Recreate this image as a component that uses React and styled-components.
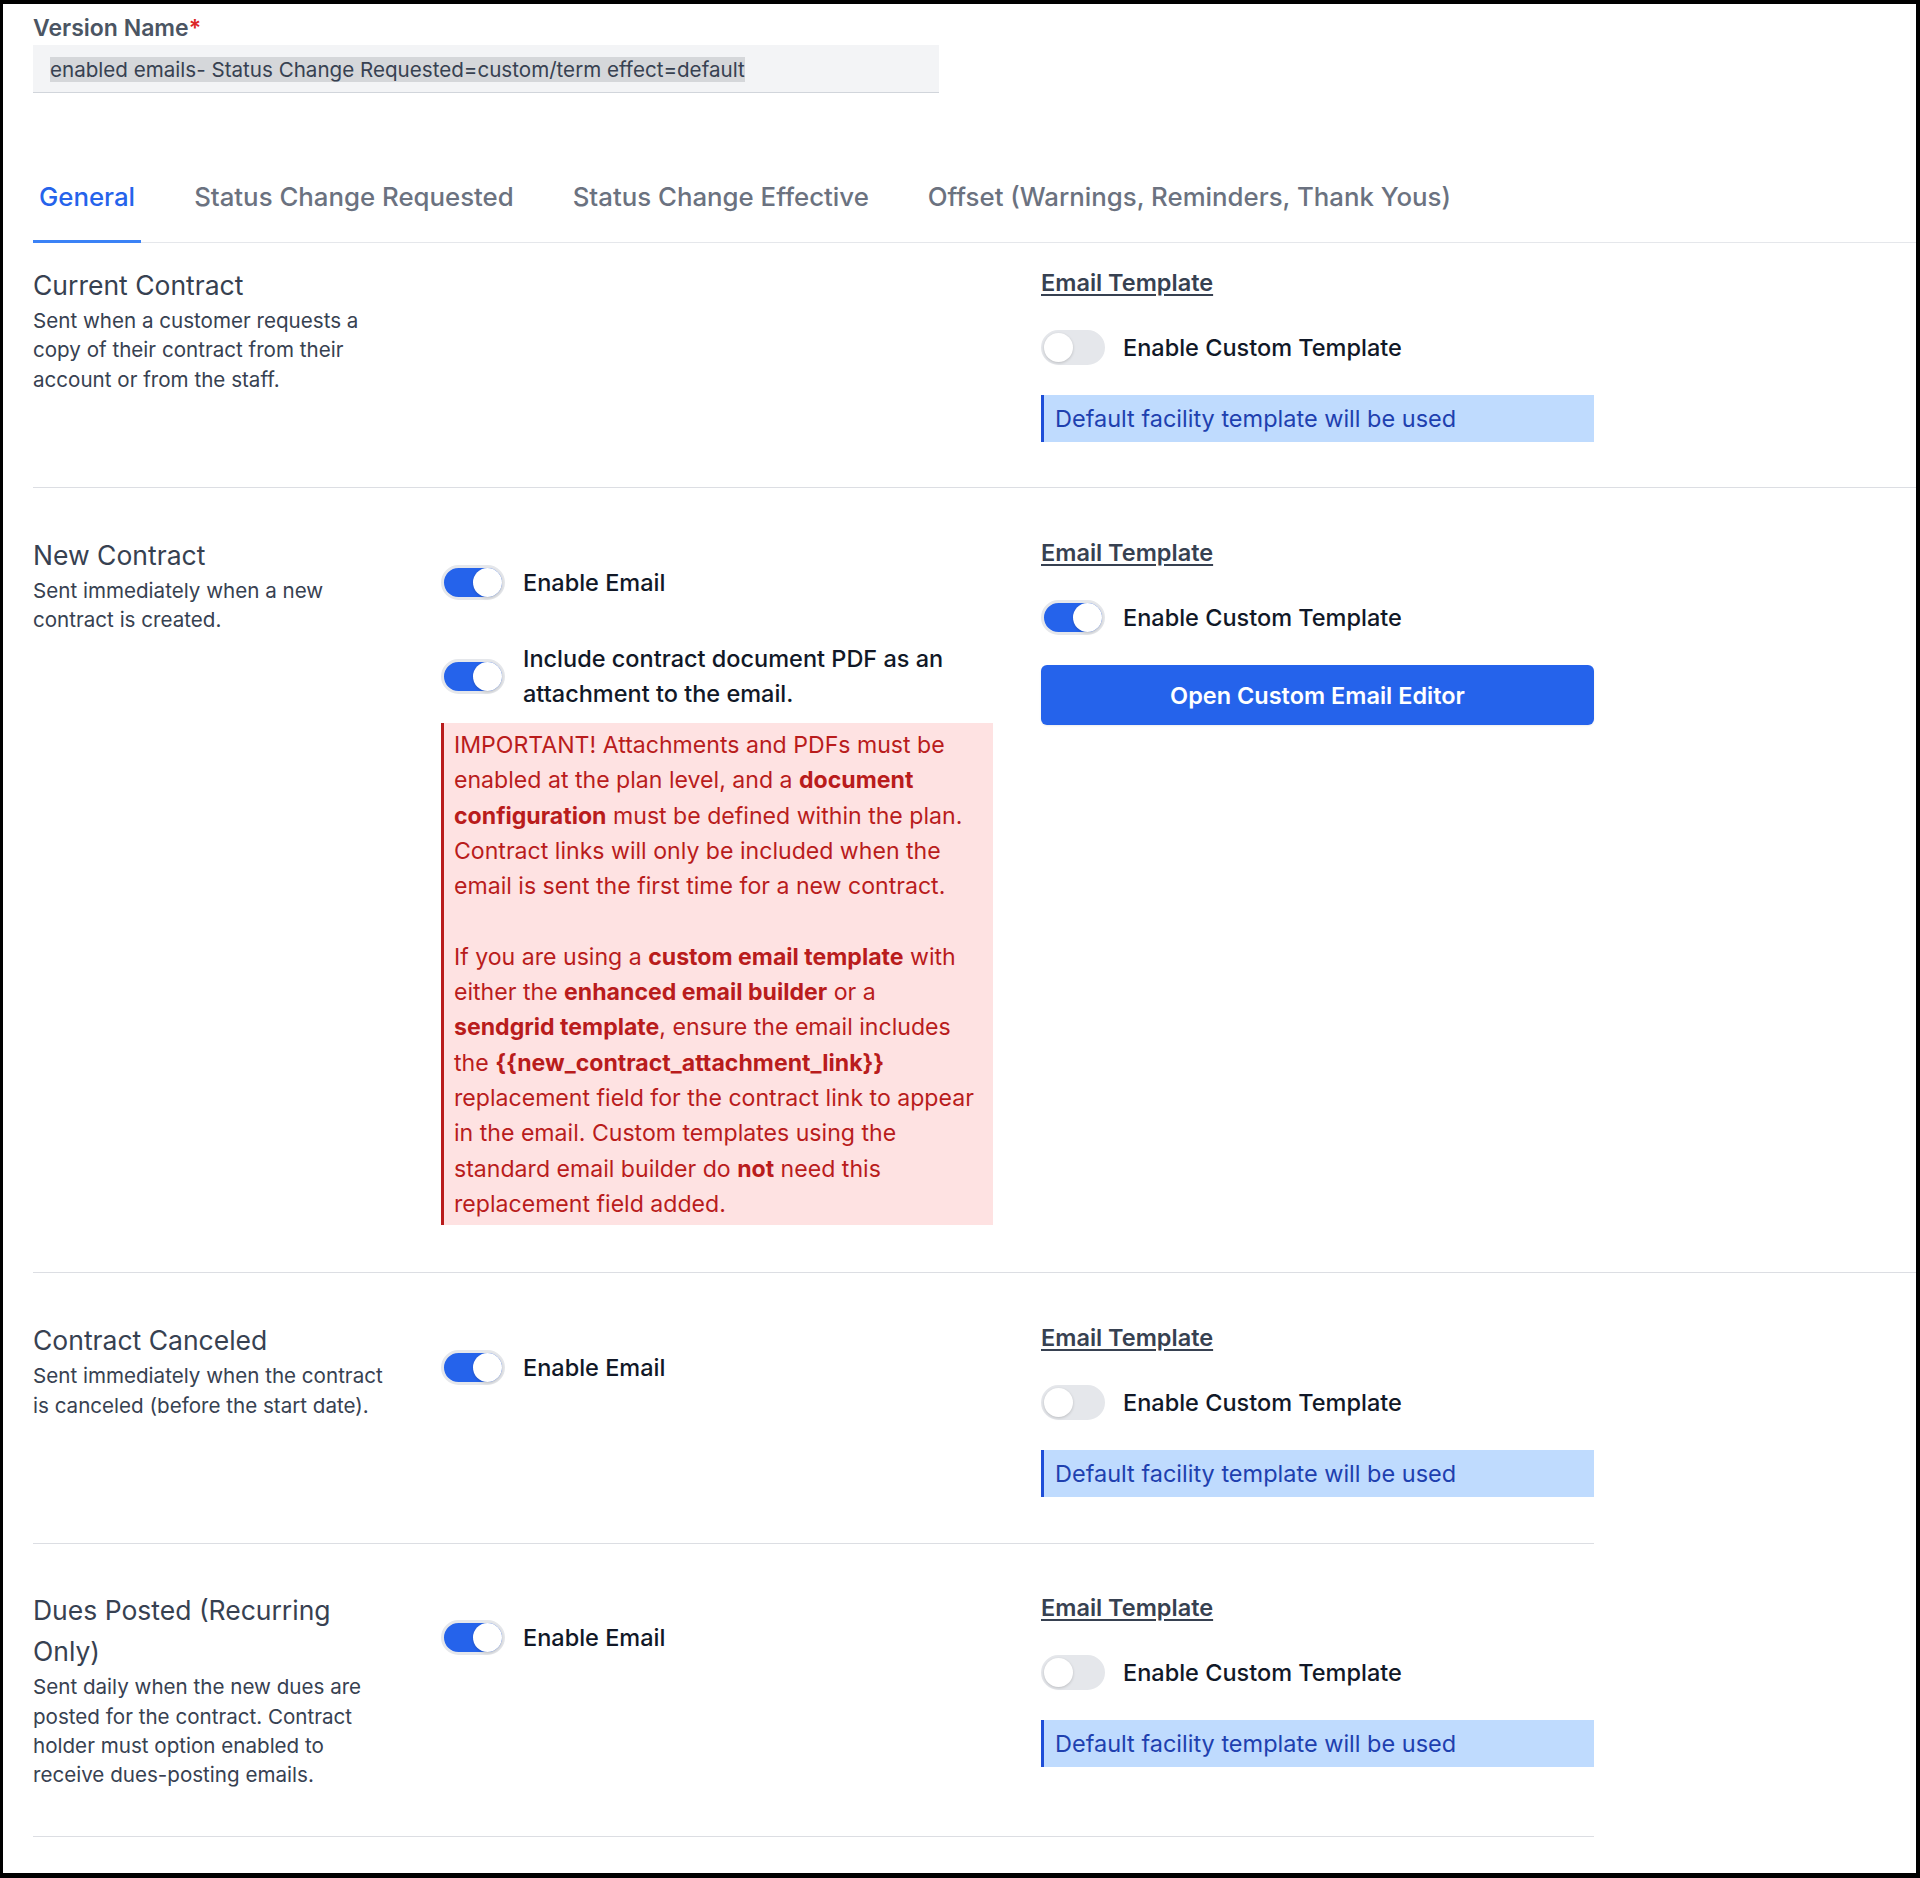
import React from "react";
import styled, { createGlobalStyle } from "styled-components";

const GlobalStyle = createGlobalStyle`
  body {
    margin: 0;
    background: #ffffff;
    font-family: Inter, "Noto Sans", "Liberation Sans", sans-serif;
  }
`;

const Frame = styled.div`
  box-sizing: border-box;
  width: 1920px;
  height: 1878px;
  overflow: hidden;
  border-style: solid;
  border-color: #000;
  border-width: 4px 4px 5px 3px;
  padding: 9px 0 0 30px;
  background: #fff;
`;

const Field = styled.div`
  display: flex;
  flex-direction: column;
  width: 906px;
`;

const Label = styled.label`
  font-size: 23px;
  line-height: 30px;
  font-weight: 600;
  color: #4b5563;
  margin-bottom: 2px;
`;

const Required = styled.span`
  color: #dc2626;
`;

const TextInput = styled.div`
  box-sizing: border-box;
  height: 48px;
  display: flex;
  align-items: center;
  padding: 1px 17px 0;
  background: #f3f4f6;
  border-bottom: 1px solid #d1d5db;
  font-size: 20.6px;
  color: #374151;
`;

const Selected = styled.span`
  background: #d5d7da;
`;

const TabList = styled.nav`
  display: flex;
  gap: 47px;
  margin-top: 63px;
  border-bottom: 1px solid #e5e7eb;
`;

const Tab = styled.div`
  padding: 23px 6px 26px;
  margin-bottom: -1px;
  border-bottom: 3px solid ${(p) => (p.$active ? "#3b82f6" : "transparent")};
  font-size: 25.8px;
  line-height: 35px;
  font-weight: 500;
  color: ${(p) => (p.$active ? "#2563eb" : "#6b7280")};
  white-space: nowrap;
`;

const Section = styled.section`
  display: grid;
  grid-template-columns: 360px 552px 553px;
  column-gap: 48px;
  align-items: start;
  padding: ${(p) => p.$top}px 0 ${(p) => p.$bottom}px;
  width: ${(p) => (p.$narrow ? "1561px" : "auto")};
  border-bottom: 1px solid #dcdee3;
`;

const Info = styled.div`
  padding-right: 6px;
`;

const Heading = styled.h3`
  margin: 0;
  font-size: 26.5px;
  line-height: 41px;
  font-weight: 400;
  color: #374151;
`;

const Description = styled.p`
  margin: 0;
  font-size: 20.6px;
  line-height: 29.4px;
  color: #374151;
`;

const Options = styled.div`
  display: flex;
  flex-direction: column;
  gap: 41px;
  padding-top: 30px;
`;

const OptionGroup = styled.div`
  display: flex;
  flex-direction: column;
  gap: 12px;
`;

const TemplateColumn = styled.div`
  display: flex;
  flex-direction: column;
  gap: 30px;
`;

const TemplateTitle = styled.div`
  font-size: 23.5px;
  line-height: 35px;
  font-weight: 600;
  color: #374151;
  text-decoration: underline;
  text-underline-offset: 3px;
`;

const ToggleRow = styled.div`
  display: flex;
  align-items: center;
  gap: 18px;
`;

const Track = styled.span`
  box-sizing: border-box;
  flex-shrink: 0;
  display: inline-flex;
  align-items: center;
  justify-content: ${(p) => (p.$on ? "flex-end" : "flex-start")};
  width: 64px;
  height: 35px;
  border-radius: 18px;
  border: 3px solid #e5e7eb;
  background: ${(p) => (p.$on ? "#2563eb" : "#e5e7eb")};
`;

const Knob = styled.span`
  width: 29px;
  height: 29px;
  border-radius: 50%;
  background: #fff;
  box-shadow: 0 1px 3px rgba(0, 0, 0, 0.18);
`;

const ToggleLabel = styled.span`
  font-size: 23.5px;
  line-height: 35px;
  font-weight: 500;
  color: #111827;
`;

const Notice = styled.div`
  box-sizing: border-box;
  padding: 6px 12px 6px 11px;
  background: #bfdbfe;
  border-left: 3px solid #1d4ed8;
  font-size: 23.5px;
  line-height: 35px;
  color: #1e40af;
`;

const Warning = styled.div`
  box-sizing: border-box;
  padding: 5px 0 3px 10px;
  background: #fee2e2;
  border-left: 3px solid #b91c1c;
  font-size: 23.1px;
  line-height: 35.3px;
  color: #b91c1c;

  p {
    margin: 0;
  }
  p + p {
    margin-top: 35.3px;
  }
  strong {
    font-weight: 700;
  }
`;

const Line = styled.span`
  display: block;
  white-space: nowrap;
`;

const PrimaryButton = styled.button`
  height: 60px;
  border: none;
  border-radius: 6px;
  background: #2563eb;
  color: #fff;
  font-family: inherit;
  font-size: 23.5px;
  font-weight: 600;
  box-shadow: 0 1px 2px rgba(0, 0, 0, 0.08);
`;

const Toggle = ({ on, children }) => (
  <ToggleRow>
    <Track $on={on}>
      <Knob />
    </Track>
    <ToggleLabel>{children}</ToggleLabel>
  </ToggleRow>
);

const TemplatePanel = ({ custom }) => (
  <TemplateColumn>
    <TemplateTitle>Email Template</TemplateTitle>
    <Toggle on={custom}>Enable Custom Template</Toggle>
    {custom ? (
      <PrimaryButton>Open Custom Email Editor</PrimaryButton>
    ) : (
      <Notice>Default facility template will be used</Notice>
    )}
  </TemplateColumn>
);

const tabs = [
  "General",
  "Status Change Requested",
  "Status Change Effective",
  "Offset (Warnings, Reminders, Thank Yous)",
];

export default function App() {
  return (
    <>
      <GlobalStyle />
      <Frame>
        <Field>
          <Label>
            Version Name<Required>*</Required>
          </Label>
          <TextInput>
            <Selected>
              enabled emails- Status Change Requested=custom/term effect=default
            </Selected>
          </TextInput>
        </Field>

        <TabList>
          {tabs.map((t, i) => (
            <Tab key={t} $active={i === 0}>
              {t}
            </Tab>
          ))}
        </TabList>

        <Section $top={22} $bottom={45}>
          <Info>
            <Heading>Current Contract</Heading>
            <Description>
              Sent when a customer requests a copy of their contract from their
              account or from the staff.
            </Description>
          </Info>
          <div />
          <TemplatePanel custom={false} />
        </Section>

        <Section $top={47} $bottom={47}>
          <Info>
            <Heading>New Contract</Heading>
            <Description>Sent immediately when a new contract is created.</Description>
          </Info>
          <Options>
            <Toggle on>Enable Email</Toggle>
            <OptionGroup>
              <Toggle on>Include contract document PDF as an attachment to the email.</Toggle>
              <Warning>
                <p>
                  <Line>IMPORTANT! Attachments and PDFs must be</Line>
                  <Line>
                    enabled at the plan level, and a <strong>document</strong>
                  </Line>
                  <Line>
                    <strong>configuration</strong> must be defined within the plan.
                  </Line>
                  <Line>Contract links will only be included when the</Line>
                  <Line>email is sent the first time for a new contract.</Line>
                </p>
                <p>
                  <Line>
                    If you are using a <strong>custom email template</strong> with
                  </Line>
                  <Line>
                    either the <strong>enhanced email builder</strong> or a
                  </Line>
                  <Line>
                    <strong>sendgrid template</strong>, ensure the email includes
                  </Line>
                  <Line>
                    the <strong>{"{{new_contract_attachment_link}}"}</strong>
                  </Line>
                  <Line>replacement field for the contract link to appear</Line>
                  <Line>in the email. Custom templates using the</Line>
                  <Line>
                    standard email builder do <strong>not</strong> need this
                  </Line>
                  <Line>replacement field added.</Line>
                </p>
              </Warning>
            </OptionGroup>
          </Options>
          <TemplatePanel custom />
        </Section>

        <Section $narrow $top={47} $bottom={46}>
          <Info>
            <Heading>Contract Canceled</Heading>
            <Description>
              Sent immediately when the contract is canceled (before the start date).
            </Description>
          </Info>
          <Options>
            <Toggle on>Enable Email</Toggle>
          </Options>
          <TemplatePanel custom={false} />
        </Section>

        <Section $narrow $top={46} $bottom={46}>
          <Info>
            <Heading>Dues Posted (Recurring Only)</Heading>
            <Description>
              Sent daily when the new dues are posted for the contract. Contract
              holder must option enabled to receive dues-posting emails.
            </Description>
          </Info>
          <Options>
            <Toggle on>Enable Email</Toggle>
          </Options>
          <TemplatePanel custom={false} />
        </Section>
      </Frame>
    </>
  );
}
